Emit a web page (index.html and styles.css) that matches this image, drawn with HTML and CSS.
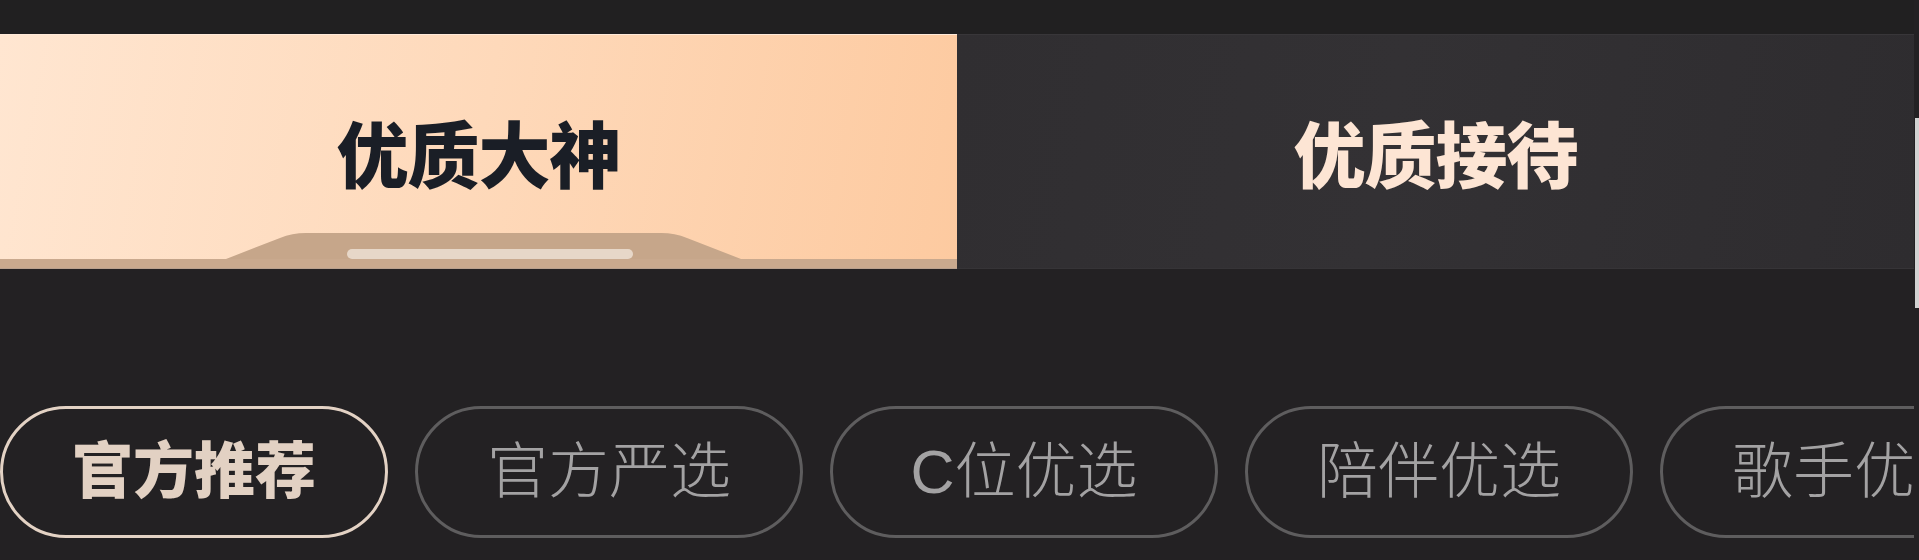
FILE: index.html
```html
<!DOCTYPE html>
<html lang="zh-CN">
<head>
<meta charset="utf-8">
<title>优质大神</title>
<link rel="stylesheet" href="styles.css">
</head>
<body>
<div class="page">
  <div class="topbar"></div>
  <div class="tabs">
    <div class="tab tab-active">
      <div class="tab-label">优质大神</div>
      <div class="indicator">
        <svg class="bump" width="515" height="26" viewBox="0 0 515 26">
          <path d="M0 26 L54 5 Q66 0 80 0 L435 0 Q449 0 461 5 L515 26 Z" fill="#c6a68a"/>
          <rect x="121" y="16" width="286" height="10" rx="5" fill="#e7d7c8"/>
        </svg>
        <div class="strip"></div>
      </div>
    </div>
    <div class="tab tab-idle">
      <div class="tab-label">优质接待</div>
    </div>
  </div>
  <div class="chips">
    <div class="chip chip-active">官方推荐</div>
    <div class="chip">官方严选</div>
    <div class="chip">C位优选</div>
    <div class="chip">陪伴优选</div>
    <div class="chip">歌手优选</div>
  </div>
</div>
<div class="scroll-thumb"></div>
</body>
</html>
```

FILE: styles.css
```css
html, body {
  margin: 0;
  padding: 0;
}

body {
  width: 1919px;
  height: 560px;
  background: #232123;
  overflow: hidden;
  position: relative;
  font-family: "Noto Sans CJK SC", "Noto Sans", sans-serif;
}

.page {
  width: 1914px;
  overflow: hidden;
}

.topbar {
  height: 34px;
  background: #212021;
}

.tabs {
  display: flex;
  height: 235px;
}

.tab {
  flex: 1;
  display: flex;
  flex-direction: column;
  align-items: center;
  box-sizing: border-box;
}

.tab-label {
  padding-top: 80px;
  font-size: 72px;
  line-height: 1;
  font-weight: 900;
  letter-spacing: -1px;
}

.tab-active {
  background: linear-gradient(100deg, #ffe6d1 0%, #fed9ba 50%, #fdcaa0 100%);
  border-top: 1px solid #ffeada;
}

.tab-active .tab-label {
  color: #1a1e26;
}

.tab-idle {
  background: linear-gradient(100deg, #302e31 0%, #333134 45%, #2e2c2f 100%);
  border-top: 1px solid #383639;
  border-bottom: 1px solid #363437;
}

.tab-idle .tab-label {
  color: #fde5d4;
}

.indicator {
  margin-top: auto;
  align-self: stretch;
  display: flex;
  flex-direction: column;
}

.bump {
  display: block;
  margin-left: 226px;
}

.strip {
  height: 9px;
  background: #c9a98e;
  border-bottom: 1px solid #b8a08e;
}

.chips {
  display: flex;
  gap: 27px;
  margin-top: 137px;
}

.chip {
  flex: 0 0 388px;
  height: 132px;
  box-sizing: border-box;
  border: 3px solid #5e5d5e;
  border-radius: 66px;
  display: flex;
  align-items: center;
  justify-content: center;
  font-family: "Liberation Sans", "Noto Sans CJK SC", sans-serif;
  font-size: 61px;
  line-height: 1;
  font-weight: 300;
  color: #a3a2a3;
  white-space: nowrap;
}

.chip-active {
  border-color: #e3d2c4;
  color: #e2d1c3;
  font-weight: 900;
}

.scroll-thumb {
  position: absolute;
  right: 0;
  top: 118px;
  width: 4px;
  height: 190px;
  background: #d2d2d2;
}
```
